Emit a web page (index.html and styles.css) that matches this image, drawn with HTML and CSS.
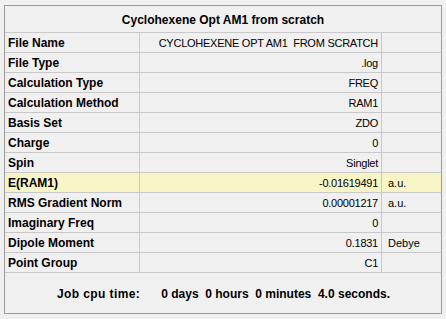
FILE: index.html
```html
<!DOCTYPE html>
<html>
<head>
<meta charset="utf-8">
<link rel="stylesheet" href="styles.css">
</head>
<body>
<div class="panel">
  <div class="title">Cyclohexene Opt AM1 from scratch</div>
  <div class="grid">
    <div class="lbl">File Name</div><div class="val">CYCLOHEXENE OPT AM1&nbsp; FROM SCRATCH</div><div class="unit"></div>
    <div class="lbl">File Type</div><div class="val">.log</div><div class="unit"></div>
    <div class="lbl">Calculation Type</div><div class="val">FREQ</div><div class="unit"></div>
    <div class="lbl">Calculation Method</div><div class="val">RAM1</div><div class="unit"></div>
    <div class="lbl">Basis Set</div><div class="val">ZDO</div><div class="unit"></div>
    <div class="lbl">Charge</div><div class="val">0</div><div class="unit"></div>
    <div class="lbl">Spin</div><div class="val">Singlet</div><div class="unit"></div>
    <div class="lbl hl">E(RAM1)</div><div class="val hl">-0.01619491</div><div class="unit hl">a.u.</div>
    <div class="lbl">RMS Gradient Norm</div><div class="val">0.00001217</div><div class="unit">a.u.</div>
    <div class="lbl">Imaginary Freq</div><div class="val">0</div><div class="unit"></div>
    <div class="lbl">Dipole Moment</div><div class="val">0.1831</div><div class="unit">Debye</div>
    <div class="lbl">Point Group</div><div class="val">C1</div><div class="unit"></div>
  </div>
  <div class="footer">
    <span class="f-lbl">Job cpu time:</span>
    <span>0 days&nbsp; 0 hours&nbsp; 0 minutes&nbsp; 4.0 seconds.</span>
  </div>
</div>
</body>
</html>
```

FILE: styles.css
```css
html, body {
  margin: 0;
  padding: 0;
  background: #f0f0f0;
}
body {
  padding: 5px 0 0 4px;
  font-family: "Liberation Sans", Arial, sans-serif;
  font-size: 12px;
  color: #000;
}
.panel {
  width: 436px;
  height: 307px;
  border: 1px solid #999a9c;
  display: flex;
  flex-direction: column;
}
.title {
  border-bottom: 1px solid #c8c8c8;
  display: flex;
  align-items: center;
  justify-content: center;
  font-weight: bold;
  padding-top: 1px;
  box-sizing: border-box;
  height: 27px;
}
.grid {
  display: grid;
  grid-template-columns: 135px 242px 1fr;
  grid-auto-rows: 20px;
}
.grid > div {
  border-bottom: 1px solid #c8c8c8;
  box-sizing: border-box;
  display: flex;
  align-items: center;
  white-space: nowrap;
}
.lbl {
  border-right: 1px solid #c8c8c8;
  font-weight: bold;
  padding-left: 3px;
}
.val {
  border-right: 1px solid #c8c8c8;
  justify-content: flex-end;
  padding-right: 3px;
  font-size: 11px;
  letter-spacing: -0.25px;
}
.unit {
  padding-left: 6px;
  font-size: 11px;
}
.hl {
  background: #f7f5c6;
}
.footer {
  flex: 1;
  display: flex;
  align-items: center;
  font-weight: bold;
  padding-left: 52px;
  padding-top: 2px;
}
.f-lbl {
  margin-right: 21px;
  letter-spacing: 0.4px;
}
```
